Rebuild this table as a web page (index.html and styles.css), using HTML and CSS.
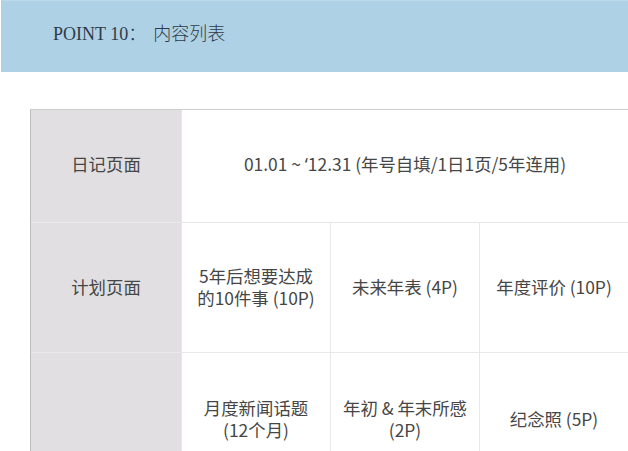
FILE: index.html
```html
<!DOCTYPE html>
<html lang="zh">
<head>
<meta charset="utf-8">
<link rel="stylesheet" href="styles.css">
</head>
<body>
<header class="band">
  <h1 class="title"><span class="latin">POINT 10</span><span class="cjk">：</span><span class="cjk gap">内容列表</span></h1>
</header>
<main class="sheet">
  <div class="grid">
    <div class="cell label first">日记页面</div>
    <div class="cell wide first">01.01 ~&nbsp;<span class="quote">‘</span>12.31 (年号自填/1日1页/5年连用)</div>

    <div class="cell label">计划页面</div>
    <div class="cell">5年后想要达成<br>的10件事 (10P)</div>
    <div class="cell">未来年表 (4P)</div>
    <div class="cell">年度评价 (10P)</div>

    <div class="cell label"></div>
    <div class="cell">月度新闻话题<br>(12个月)</div>
    <div class="cell">年初 &amp; 年末所感<br>(2P)</div>
    <div class="cell">纪念照 (5P)</div>
  </div>
</main>
</body>
</html>
```

FILE: styles.css
```css
html, body {
  margin: 0;
  padding: 0;
  background: #ffffff;
}
body {
  width: 628px;
  height: 451px;
  overflow: hidden;
  font-family: "Noto Sans CJK SC", "Noto Sans", sans-serif;
}
.band {
  height: 72px;
  margin-left: 1px;
  background: #aed1e5;
  border-top: 1px solid #bcd9ea;
  box-sizing: border-box;
  padding: 19px 0 0 52px;
}
.title {
  margin: 0;
  font-weight: 400;
  font-size: 18px;
  line-height: 24px;
  color: #2d3b48;
  font-family: "Liberation Serif", "Noto Sans CJK SC", serif;
}
.title .cjk {
  font-family: "Noto Sans CJK SC", sans-serif;
  font-size: 18px;
  font-weight: 300;
}
.title .gap {
  margin-left: 7px;
}
.sheet {
  padding: 37px 0 0 30px;
}
.grid {
  display: grid;
  grid-template-columns: 151px 149px 149px 149px;
  grid-template-rows: 113px 130px 134px;
  border-top: 1px solid #cdcdcd;
  border-left: 1px solid #bdbdbd;
  box-sizing: border-box;
  width: 598px;
}
.cell {
  box-sizing: border-box;
  border-right: 1px solid #e8e8e8;
  border-bottom: 1px solid #e8e8e8;
  display: flex;
  align-items: center;
  justify-content: center;
  text-align: center;
  font-size: 17.4px;
  font-weight: 400;
  line-height: 22px;
  padding-bottom: 2px;
  color: #464646;
  background: #ffffff;
}
.cell.first {
  padding-bottom: 4px;
}
.cell.label {
  background: #e1dfe1;
  border-right: 1px solid #e6e4e6;
  border-bottom: 1px solid #ebe9eb;
}
.cell.wide {
  grid-column: 2 / span 3;
}
.quote {
  font-family: "Noto Sans", sans-serif;
}
```
